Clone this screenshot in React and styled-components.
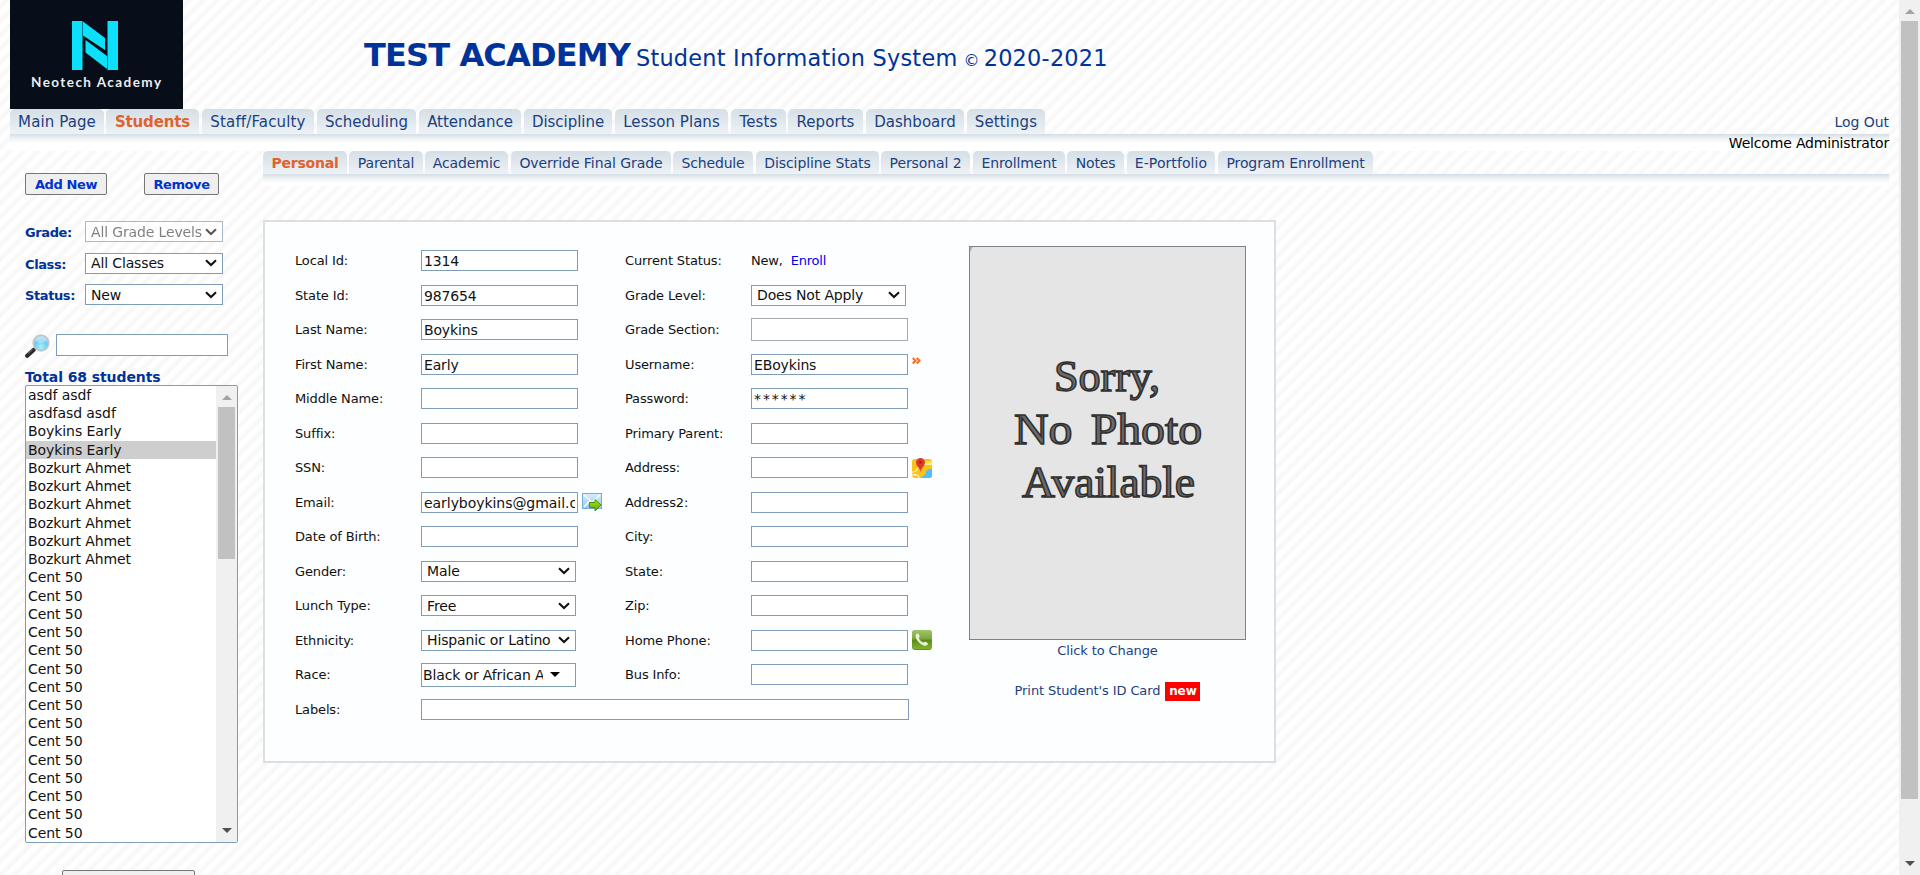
import React from "react";
import styled, { createGlobalStyle } from "styled-components";

const GlobalStyle = createGlobalStyle`
  html, body { margin: 0; height: 875px; overflow: hidden; }
  *, *::before, *::after { box-sizing: border-box; }
  body {
    font-family: Verdana, "DejaVu Sans", sans-serif;
    color: #111;
    background: #fff;
  }
  a { color: #1b3f7f; text-decoration: none; }
`;

const stripes = `repeating-linear-gradient(-45deg, #fff 0, #fff 2.6px, #f8f8f8 5px, #f8f8f8 7px, #fff 9.6px, #fff 9.9px)`;

const Window = styled.div`
  display: flex;
  width: 1920px;
  height: 875px;
  overflow: hidden;
`;
const Page = styled.div`
  width: 1899px;
  height: 875px;
  overflow: hidden;
  padding: 0 10px;
  background: ${stripes};
`;
const Header = styled.header`
  display: flex;
  height: 109px;
`;
const Title = styled.h1`
  margin: 33px 0 0 181px;
  font-size: 22.4px;
  font-weight: 400;
  line-height: 44px;
  color: #039;
  white-space: nowrap;
  letter-spacing: 0.23px;
`;
const School = styled.b`
  font-size: 32px;
  letter-spacing: -0.85px;
  margin-right: 6px;
`;
const Mark = styled.small`
  font-size: 16px;
  margin: 0 4px 0 6px;
`;

const TabBar = styled.nav`
  display: flex;
  height: ${(p) => (p.$sub ? 23 : 25)}px;
`;
const Tab = styled.a`
  width: ${(p) => p.$w}px;
  margin-right: ${(p) => p.$gap}px;
  flex: none;
  text-align: center;
  white-space: nowrap;
  border-radius: 5px 5px 0 0;
  background: linear-gradient(#d5dfe6, #edf2f5);
  font-size: ${(p) => (p.$sub ? 14 : 15)}px;
  line-height: ${(p) => (p.$sub ? 24 : 27)}px;
  letter-spacing: ${(p) => p.$ls}px;
  font-weight: ${(p) => (p.$active ? 700 : 400)};
  color: ${(p) => (p.$active ? "#e0622c" : "#1b3f7f")};
`;
const Shade = styled.div`
  height: ${(p) => p.$h}px;
  background: linear-gradient(#d3dde4, #ecf1f3 4px, #fff 9px);
  text-align: right;
`;
const LogOut = styled.a`
  margin-left: auto;
  font-size: 14px;
  line-height: 26px;
  letter-spacing: -0.05px;
`;
const Welcome = styled.div`
  font-size: 14px;
  line-height: 18px;
  letter-spacing: -0.18px;
  color: #000;
`;

const Main = styled.div`
  display: flex;
`;
const Side = styled.aside`
  width: 253px;
  padding: 22px 0 0 15px;
`;
const Content = styled.main`
  flex: 1;
`;

const Buttons = styled.div`
  display: flex;
  gap: 37px;
`;
const Button = styled.button`
  width: ${(p) => p.$w}px;
  height: 22px;
  padding: 1px 0 0;
  border: 1px solid #767676;
  border-radius: 2px;
  background: #efefef;
  color: #0033cc;
  font: 700 13px/20px Verdana, "DejaVu Sans", sans-serif;
  letter-spacing: -0.4px;
`;
const Filters = styled.div`
  margin-top: 26px;
  display: grid;
  row-gap: 10.5px;
`;
const Filter = styled.div`
  display: flex;
  height: 21px;
`;
const FilterLabel = styled.b`
  width: 60px;
  font-size: 13px;
  line-height: 23px;
  letter-spacing: -0.4px;
  color: #039;
`;
const SelectBox = styled.div`
  display: flex;
  align-items: center;
  width: ${(p) => p.$w}px;
  height: 21px;
  padding: 0 5px;
  border: 1px solid #7f9db9;
  background: #fff;
  opacity: ${(p) => (p.$disabled ? 0.7 : 1)};
  color: ${(p) => (p.$disabled ? "#4d4d4d" : "#111")};
`;
const SelectText = styled.span`
  flex: 1;
  overflow: hidden;
  white-space: nowrap;
  font-size: 14px;
  line-height: 20px;
  letter-spacing: -0.14px;
`;
const Search = styled.div`
  display: flex;
  gap: 6px;
  margin-top: 29px;
  height: 25px;
`;
const Total = styled.b`
  display: block;
  margin-top: 8px;
  padding-top: 2px;
  font-size: 14px;
  line-height: 16px;
  letter-spacing: -0.08px;
  color: #039;
`;
const ListBox = styled.div`
  display: flex;
  width: 213px;
  height: 458px;
  border: 1px solid #7f9db9;
  border-radius: 2px;
  background: #fff;
`;
const Options = styled.div`
  flex: 1;
`;
const Option = styled.div`
  height: 18.24px;
  padding-left: 2px;
  font-size: 14px;
  line-height: 18px;
  letter-spacing: -0.07px;
  background: ${(p) => (p.$on ? "#cecece" : "transparent")};
`;
const Track = styled.div`
  display: flex;
  flex-direction: column;
  justify-content: space-between;
  align-items: center;
  width: 21px;
  padding: 9px 0;
  background: #f0f0f0;
`;
const Thumb = styled.div`
  width: 17px;
  height: ${(p) => p.$h}px;
  margin: 7px 0 auto;
  background: #c1c1c1;
`;
const BottomButton = styled(Button)`
  display: block;
  margin: 27px 0 0 37px;
`;

const Panel = styled.section`
  display: flex;
  width: 1013px;
  height: 543px;
  margin-top: 34px;
  padding: 21px 0 0 30px;
  border: 2px solid #dcdfe0;
  background: #fcfeff;
`;
const Fields = styled.div`
  width: 674px;
  padding-top: 0.5px;
`;
const FormRow = styled.div`
  display: grid;
  grid-template-columns: 126px 204px 126px auto;
  align-items: center;
  height: 34.5px;
`;
const FieldLabel = styled.label`
  padding-top: 1px;
  font-size: 13px;
  line-height: 20px;
  letter-spacing: -0.14px;
  white-space: nowrap;
`;
const Cell = styled.div`
  display: flex;
  align-items: center;
  gap: 4px;
  grid-column: ${(p) => (p.$wide ? "span 3" : "auto")};
  font-size: 13px;
  line-height: 21px;
  letter-spacing: -0.2px;
`;
const Input = styled.input`
  flex: none;
  width: ${(p) => p.$w || 157}px;
  height: ${(p) => p.$h || 21}px;
  padding: 1px 2px 0;
  border: 1px solid ${(p) => (p.$grey ? "#a9a9a9" : "#7f9db9")};
  border-radius: 0;
  background: #fff;
  color: #111;
  font: 14px Verdana, "DejaVu Sans", sans-serif;
  letter-spacing: ${(p) => p.$ls ?? -0.15}px;
`;
const Enroll = styled.a`
  color: #00e;
  margin-left: 4px;
`;
const Race = styled.div`
  display: flex;
  align-items: center;
  width: 155px;
  height: 24px;
  padding: 0 15px 0 1px;
  gap: 7px;
  border: 1px solid #7f9db9;
  background: #fff;
`;
const PhotoSide = styled.div`
  width: 277px;
  padding-top: 3px;
  text-align: center;
  font-size: 13px;
  letter-spacing: -0.1px;
  svg { display: block; }
`;
const PhotoLink = styled.a`
  display: block;
  padding-top: 1px;
  line-height: 20px;
`;
const PrintLine = styled.div`
  display: flex;
  justify-content: center;
  gap: 5px;
  margin-top: 21px;
  line-height: 18px;
  white-space: nowrap;
`;
const Badge = styled.b`
  width: 35px;
  height: 19px;
  background: red;
  color: #fff;
  font-size: 12px;
  line-height: 18px;
`;

const Logo = () => (
  <svg width="173" height="109" viewBox="0 0 173 109">
    <defs>
      <filter id="soft"><feGaussianBlur stdDeviation="0.35" /></filter>
    </defs>
    <rect width="173" height="109" fill="#070d19" />
    <g fill="#0be0fb" filter="url(#soft)">
      <path d="M62 21h10.500v49H62zM97.500 21h10.500v49H97.500z" />
      <path d="M73 21.500l22 16.500v12L73 35.500z" />
      <path d="M75.500 40l21.500 16v13L75.500 52.500z" />
    </g>
    <text x="21" y="87" textLength="130" fontFamily="Lato, sans-serif" fontWeight="700" fontSize="13.500" fill="#eceef0">Neotech Academy</text>
  </svg>
);
const Chevron = () => (
  <svg width="12" height="8" viewBox="0 0 12 8">
    <path d="M1 1.300l5 4.700 5-4.700" fill="none" stroke="#111" strokeWidth="2.100" />
  </svg>
);
const Triangle = ({ up, color }) => (
  <svg width="10" height="5" viewBox="0 0 10 5">
    <path d={up ? "M0 5L5 0l5 5z" : "M0 0h10L5 5z"} fill={color} />
  </svg>
);
const Magnifier = () => (
  <svg width="25" height="25" viewBox="0 0 25 25">
    <defs>
      <radialGradient id="lens" cx=".5" cy=".75" r=".75">
        <stop offset="0" stopColor="#a8f2ff" />
        <stop offset=".55" stopColor="#6cc8ef" />
        <stop offset="1" stopColor="#c9e8f6" />
      </radialGradient>
    </defs>
    <path d="M11 13.500l-3 3" stroke="#999" strokeWidth="3" />
    <path d="M8.500 16L2.200 21.800" stroke="#2c2c2e" strokeWidth="4.200" strokeLinecap="round" />
    <path d="M7.500 15.500L3 19.600" stroke="#777" strokeWidth="1" />
    <circle cx="16" cy="9" r="7.800" fill="url(#lens)" stroke="#c3c7ca" strokeWidth="1.700" />
    <ellipse cx="16" cy="6" rx="5" ry="3" fill="#e0f5fd" opacity=".45" />
  </svg>
);
const MailIcon = () => (
  <svg width="20" height="20" viewBox="0 0 20 20">
    <defs>
      <linearGradient id="mail" x2="0" y2="1"><stop stopColor="#d8effc" /><stop offset="1" stopColor="#8fc8ee" /></linearGradient>
      <linearGradient id="go" x2="0" y2="1"><stop stopColor="#b4e619" /><stop offset="1" stopColor="#5ba600" /></linearGradient>
    </defs>
    <rect x=".5" y="1.500" width="19" height="15" fill="url(#mail)" stroke="#74aed6" />
    <path d="M2 3l8 7 8-7M2 15l6-6.500M18 15l-6-6.500" fill="none" stroke="#fff" strokeWidth="1.300" />
    <path d="M7.500 10.500h5.500V7.500l6 5.500-6 6v-3.500H7.500z" fill="url(#go)" stroke="#4f8f0c" />
  </svg>
);
const MapIcon = () => (
  <svg width="20" height="20" viewBox="0 0 20 20">
    <defs><clipPath id="mapclip"><rect y="1" width="20" height="19" rx="3" /></clipPath></defs>
    <g clipPath="url(#mapclip)">
      <rect width="20" height="20" fill="#fcc21c" />
      <path d="M12 3h8v4h-8z" fill="#ffe02f" />
      <path d="M20 11c-5 0-6 2-6 4s-3 2-5 5h11z" fill="#52bdfb" />
      <path d="M0 14c6 1 6-7 10-8h10M0 17c4-1 7 0 7 3" fill="none" stroke="#fff4c2" strokeWidth="1.300" />
    </g>
    <path d="M8.500 14C8 10 4 8 4 4.500a4.500 4.500 0 0 1 9 0C13 8 9 10 8.500 14z" fill="#db3d2b" />
    <circle cx="8.500" cy="4.300" r="1.500" fill="#a82619" />
  </svg>
);
const PhoneIcon = () => (
  <svg width="20" height="20" viewBox="0 0 20 20">
    <defs><linearGradient id="phone" x2="0" y2="1"><stop stopColor="#a3c567" /><stop offset=".48" stopColor="#7ba53d" /><stop offset=".52" stopColor="#5b8a14" /><stop offset="1" stopColor="#7fb52c" /></linearGradient></defs>
    <rect width="20" height="20" rx="3.500" fill="#6d7f54" />
    <rect width="20" height="19" rx="3.500" fill="url(#phone)" />
    <path d="M4.300 4.200c1-1 2-.9 2.500 0l.8 2c.2.800-.9 1.400-.7 2.100.7 2 2.200 3.500 4.200 4.200.8.300 1.400-.9 2.200-.7l2 .9c.8.500.8 1.500 0 2.300-1 1-2.700.9-4.300.2-3.200-1.300-5.400-3.500-6.700-6.700-.7-1.600-.9-3.400 0-4.300z" fill="#e9f3d9" />
  </svg>
);
const MoreIcon = () => (
  <svg width="9" height="16" viewBox="0 0 9 16">
    <path d="M.8 2l2.700 2.700-2.700 2.700M4.800 2l2.700 2.700-2.700 2.700" fill="none" stroke="#ff6d1f" strokeWidth="2.100" />
  </svg>
);
const Photo = () => (
  <svg width="277" height="394" viewBox="0 0 277 394">
    <rect x=".5" y=".5" width="276" height="393" fill="#e5e5e5" stroke="#7e8285" />
    <path d="M1 1h3l-3 5z" fill="#b5b5b5" />
    <g fontFamily="'Liberation Serif', serif" fontSize="44" fill="#6a6a6a" stroke="#303030" strokeWidth="1.500">
      <text x="85" y="144.500" textLength="106" lengthAdjust="spacingAndGlyphs">Sorry,</text>
      <text x="45" y="197.500" textLength="188" wordSpacing="6" lengthAdjust="spacingAndGlyphs">No Photo</text>
      <text x="53" y="250.500" textLength="173" lengthAdjust="spacingAndGlyphs">Available</text>
    </g>
  </svg>
);

const mainTabs = [
  ["Main Page", 94, 2, 0.1], ["Students", 93, 3, -0.15], ["Staff/Faculty", 112, 3, 0.15], ["Scheduling", 99, 3, 0.03],
  ["Attendance", 102, 3, -0.05], ["Discipline", 88, 3, -0.03], ["Lesson Plans", 113, 3, 0.03], ["Tests", 55, 2, 0.1],
  ["Reports", 75, 3, 0.05], ["Dashboard", 98, 3, 0], ["Settings", 78, 0, 0.1],
];
const subTabs = [
  ["Personal", 84, 2, -0.2], ["Parental", 74, 2, -0.1], ["Academic", 83, 3, -0.08], ["Override Final Grade", 160, 2, -0.06],
  ["Schedule", 80, 3, -0.15], ["Discipline Stats", 123, 2, -0.1], ["Personal 2", 89, 3, -0.1], ["Enrollment", 92, 2, -0.1],
  ["Notes", 57, 3, -0.15], ["E-Portfolio", 88, 3, 0.08], ["Program Enrollment", 155, 0, -0.08],
];
const students = [
  "asdf asdf", "asdfasd asdf", "Boykins Early", "Boykins Early",
  ...Array(6).fill("Bozkurt Ahmet"),
  ...Array(15).fill("Cent 50"),
];

const Select = ({ w = 155, value, disabled }) => (
  <SelectBox $w={w} $disabled={disabled}>
    <SelectText>{value}</SelectText>
    <Chevron />
  </SelectBox>
);
const Text = ({ value = "", w, h, grey, ls }) => <Input $w={w} $h={h} $grey={grey} $ls={ls} defaultValue={value} />;

const rows = [
  ["Local Id:", <Text value="1314" />, "Current Status:", <>New, <Enroll>Enroll</Enroll></>],
  ["State Id:", <Text value="987654" />, "Grade Level:", <Select value="Does Not Apply" />],
  ["Last Name:", <Text value="Boykins" />, "Grade Section:", <Text grey h={23} />],
  ["First Name:", <Text value="Early" />, "Username:", <><Text value="EBoykins" /><MoreIcon /></>],
  ["Middle Name:", <Text />, "Password:", <Text value="******" ls={1.9} />],
  ["Suffix:", <Text />, "Primary Parent:", <Text />],
  ["SSN:", <Text />, "Address:", <><Text /><MapIcon /></>],
  ["Email:", <><Text value="earlyboykins@gmail.com" ls={-0.05} /><MailIcon /></>, "Address2:", <Text />],
  ["Date of Birth:", <Text />, "City:", <Text />],
  ["Gender:", <Select value="Male" />, "State:", <Text />],
  ["Lunch Type:", <Select value="Free" />, "Zip:", <Text />],
  ["Ethnicity:", <Select value="Hispanic or Latino" />, "Home Phone:", <><Text /><PhoneIcon /></>],
  ["Race:", <Race><SelectText>Black or African American</SelectText><Triangle color="#000" /></Race>, "Bus Info:", <Text />],
  ["Labels:", <Text w={488} />],
];

export default function App() {
  return (
    <Window>
      <GlobalStyle />
      <Page>
        <Header>
          <Logo />
          <Title><School>TEST ACADEMY</School>Student Information System<Mark>©</Mark>2020-2021</Title>
        </Header>
        <TabBar>
          {mainTabs.map(([t, w, gap, ls]) => (
            <Tab key={t} $w={w} $gap={gap} $ls={ls} $active={t === "Students"}>{t}</Tab>
          ))}
          <LogOut>Log Out</LogOut>
        </TabBar>
        <Shade $h={17}><Welcome>Welcome Administrator</Welcome></Shade>
        <Main>
          <Side>
            <Buttons>
              <Button $w={82}>Add New</Button>
              <Button $w={75}>Remove</Button>
            </Buttons>
            <Filters>
              <Filter><FilterLabel>Grade:</FilterLabel><Select w={138} value="All Grade Levels" disabled /></Filter>
              <Filter><FilterLabel>Class:</FilterLabel><Select w={138} value="All Classes" /></Filter>
              <Filter><FilterLabel>Status:</FilterLabel><Select w={138} value="New" /></Filter>
            </Filters>
            <Search><Magnifier /><Text w={172} h={22} /></Search>
            <Total>Total 68 students</Total>
            <ListBox>
              <Options>
                {students.map((s, i) => <Option key={i} $on={i === 3}>{s}</Option>)}
              </Options>
              <Track>
                <Triangle up color="#a3a3a3" />
                <Thumb $h={152} />
                <Triangle color="#505050" />
              </Track>
            </ListBox>
            <BottomButton $w={133} />
          </Side>
          <Content>
            <TabBar $sub>
              {subTabs.map(([t, w, gap, ls]) => (
                <Tab key={t} $sub $w={w} $gap={gap} $ls={ls} $active={t === "Personal"}>{t}</Tab>
              ))}
            </TabBar>
            <Shade $h={12} />
            <Panel>
              <Fields>
                {rows.map(([a, f, b, g]) => (
                  <FormRow key={a}>
                    <FieldLabel>{a}</FieldLabel>
                    <Cell $wide={!b}>{f}</Cell>
                    {b && <FieldLabel>{b}</FieldLabel>}
                    {b && <Cell>{g}</Cell>}
                  </FormRow>
                ))}
              </Fields>
              <PhotoSide>
                <Photo />
                <PhotoLink>Click to Change</PhotoLink>
                <PrintLine><a>Print Student's ID Card</a><Badge>new</Badge></PrintLine>
              </PhotoSide>
            </Panel>
          </Content>
        </Main>
      </Page>
      <Track>
        <Triangle up color="#a3a3a3" />
        <Thumb $h={778} />
        <Triangle color="#505050" />
      </Track>
    </Window>
  );
}
